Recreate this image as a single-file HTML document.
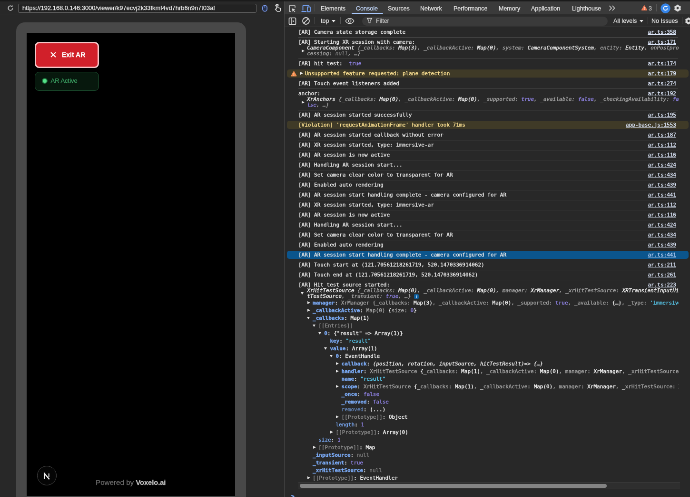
<!DOCTYPE html>
<html lang="en">
<head>
<meta charset="utf-8">
<title>AR viewer - DevTools</title>
<style>
html,body{margin:0;padding:0;background:#282828;}
body{width:690px;height:497px;overflow:hidden;position:relative;}
#app{will-change:transform;position:absolute;left:0;top:0;width:1450px;height:1045px;transform:scale(.47586);transform-origin:0 0;overflow:hidden;background:#282828;font-family:"Liberation Sans","DejaVu Sans",sans-serif;color:#e3e3e3;-webkit-text-stroke:0.25px;}
#app *{box-sizing:border-box;}
.abs{position:absolute;}
/* top dark strip */
#strip{left:0;top:0;width:1450px;height:3px;background:#1b1b1b;}
/* ---------- left pane ---------- */
#left{left:0;top:3px;width:597px;height:1042px;background:#282828;overflow:hidden;}
#lbar{left:0;top:0;width:597px;height:27px;border-bottom:1px solid #555;}
#url{left:38px;top:5px;width:501px;height:19px;border:1px solid #686868;border-radius:3px;background:#222;font-size:12.9px;line-height:16.500px;padding-left:8px;color:#f0f0f0;white-space:nowrap;overflow:hidden;letter-spacing:0px;}
#frame{left:34px;top:44px;width:483px;height:1040px;border-radius:18px;background:#484848;}
#screen{left:56px;top:66px;width:438px;height:973px;background:#000;overflow:hidden;}
#exit{left:17px;top:19px;width:135px;height:55px;border-radius:9px;background:#d1202a;border:3px solid #f6c6c8;color:#fff;font-weight:bold;font-size:14px;line-height:49px;white-space:nowrap;}
#exit .x{position:absolute;left:28px;top:0;font-size:13px;font-weight:bold;}
#exit .t{position:absolute;left:54px;top:0;}
#active{left:17px;top:82px;width:135px;height:40px;border-radius:9px;background:#07180d;border:1.500px solid #1f5533;color:#3da565;font-size:13px;line-height:36px;white-space:nowrap;}
#active .dot{position:absolute;left:16px;top:14px;width:8px;height:8px;border-radius:50%;background:#55e088;box-shadow:0 0 0 2px rgba(50,190,100,.55);}
#active .t{position:absolute;left:32.500px;top:0;}
#ncirc{left:22px;top:910px;width:41px;height:41px;border-radius:50%;border:1px solid #4a4a4a;background:#050505;}
#pow{left:145px;top:935px;font-size:15.2px;line-height:20px;color:#6f6f6f;white-space:nowrap;}
#pow b{color:#c4c4c4;font-weight:bold;font-size:14.6px;}
/* ---------- divider ---------- */
#divider{left:597px;top:3px;width:1px;height:1042px;background:#474747;}
/* ---------- right pane ---------- */
#right{left:598px;top:3px;width:852px;height:1042px;background:#282828;overflow:hidden;}
#tabs{left:0;top:0;width:852px;height:27px;background:#3a3a3a;border-bottom:1px solid #505050;font-size:12.5px;line-height:26px;color:#e3e3e3;white-space:nowrap;}
#tabs .tab{position:absolute;top:2px;}
#tabs .sel{color:#c3d8fb;}
#tabs .ul{position:absolute;top:24px;height:2px;background:#a8c7fa;border-radius:1px;}
.vsep{position:absolute;width:1px;background:#555;}
#tool{left:0;top:27px;width:852px;height:27px;background:#2b2b2b;border-bottom:1px solid #474747;font-size:12.5px;line-height:26px;white-space:nowrap;}
#filter{left:163px;top:4.500px;width:516px;height:19px;border-radius:9.500px;background:#3a3a3a;}
#tool .t{position:absolute;top:1px;}
/* console */
#con{-webkit-text-stroke:0.36px;left:0;top:54px;width:852px;height:988px;font-family:"DejaVu Sans Mono","Liberation Mono",monospace;font-size:11px;line-height:12px;color:#eaeaea;overflow:hidden;}
.row{position:relative;width:852px;height:21px;padding:4.5px 0 0 29px;white-space:nowrap;}
.row.t3{height:45px;}
.row::before{content:"";position:absolute;left:29px;right:25px;top:0;height:1px;background:#4a4a4a;}
.row.nb::before{display:none;}
.row .hl{position:absolute;left:5px;right:3px;top:2px;bottom:2px;border-radius:5px;z-index:0;}
.row.warn .hl{background:#3f3a27;}
.row.warn{color:#fde293;}
.row.selr .hl{background:#0b558d;}
.row.selr .lnk{color:#bcd4fb;}
.row .c{position:relative;z-index:1;}
.row .lnk{position:absolute;right:29px;top:4.5px;text-decoration:underline;color:#dbe5f8;z-index:1;}
.obj{position:relative;padding-left:18.2px;font-style:italic;}
.obj .a{position:absolute;left:6.500px;top:9px;}
.g{color:#a4a4a4;}
.w{color:#f1f1f1;}
.p{color:#9487ec;}
.s{color:#5cd5fb;}
.n{color:#7a7a7a;}
.k{color:#7cacf8;font-weight:bold;}
.kd{color:#8e8e8e;}
.ni{font-style:normal;}
/* arrows */
.ar,.ad{display:inline-block;width:0;height:0;vertical-align:middle;}
.ar{border-left:6px solid #e4e4e4;border-top:3.5px solid transparent;border-bottom:3.5px solid transparent;}
.ad{border-top:5.5px solid #e4e4e4;border-left:3.8px solid transparent;border-right:3.8px solid transparent;}
.info{display:inline-block;width:10px;height:10px;margin-top:1px;border-radius:2.500px;background:#0d5a96;color:#a8d4ff;font-style:italic;font-weight:bold;font-size:9px;line-height:10px;text-align:center;vertical-align:top;font-family:"Liberation Serif",serif;}
#hscroll{left:29px;top:1010px;width:802px;height:15px;background:#2e2e2e;border-top:1px solid #3d3d3d;border-bottom:1px solid #3d3d3d;}
#hscroll div{position:absolute;left:3px;top:3px;width:645px;height:7.5px;border-radius:4px;background:#838383;}
#prompt{left:13px;top:1033px;font-family:"DejaVu Sans Mono","Liberation Mono",monospace;font-size:13px;line-height:14px;color:#7cacf8;font-weight:bold;}
/* tree */
#tree{position:relative;margin-top:0.5px;width:800px;overflow:hidden;padding-left:0.7px;}
.tr{position:relative;height:16px;line-height:16px;white-space:nowrap;}
.tr .ar{position:absolute;top:4.2px;margin-left:1.8px;}
.tr .ad{position:absolute;top:5.2px;margin-left:1.3px;}
.tr .tx{position:absolute;top:0;}
</style>
</head>
<body>
<div id="app">
<div id="strip" class="abs"></div>

<!-- ================= LEFT ================= -->
<div id="left" class="abs">
  <div id="lbar" class="abs">
    <svg class="abs" style="left:14px;top:6px" width="16" height="16" viewBox="0 0 16 16"><path d="M12.6 8.4a4.7 4.7 0 1 1-1.5-3.8" fill="none" stroke="#d0d0d0" stroke-width="1.6"/><path d="M9.2 4.9h3.2V1.7z" fill="#d0d0d0"/></svg>
    <div id="url" class="abs">https://192.168.0.146:3000/viewer/k97ecvj2k33fkmf4vd7hrb6n9n7t03af</div>
    <svg class="abs" style="left:549.500px;top:6.500px" width="13" height="15" viewBox="0 0 13 15"><rect x="1.800" y="1.200" width="9.400" height="12.600" rx="4.700" fill="#26324e" stroke="#7c9cf0" stroke-width="1.600"/><path d="M6.500 1.500v4.500" stroke="#7c9cf0" stroke-width="1.300"/></svg>
    <svg class="abs" style="left:574px;top:4px" width="20" height="20" viewBox="0 0 20 20"><path d="M7 11V4.2a1.4 1.4 0 0 1 2.8 0V9l4.6 1.1c.9.2 1.4 1 1.3 1.9l-.6 3.6c-.1.8-.8 1.4-1.6 1.400H9.300c-.6 0-1.100-.3-1.400-.7L4.400 12.400c.7-.9 1.700-1.100 2.600-.6z" fill="none" stroke="#e0e0e0" stroke-width="1.5" stroke-linejoin="round"/><path d="M4.800 6.200a3.800 3.800 0 0 1 7.200-1.800" fill="none" stroke="#e0e0e0" stroke-width="1.300"/></svg>
  </div>
  <div id="frame" class="abs"></div>
  <div id="screen" class="abs">
    <div id="exit" class="abs"><svg class="abs" style="left:28.500px;top:17px" width="14" height="14" viewBox="0 0 14 14"><path d="M2 2l10 10M12 2L2 12" stroke="#fff" stroke-width="2.1" fill="none"/></svg><span class="t">Exit AR</span></div>
    <div id="active" class="abs"><span class="dot"></span><span class="t">AR Active</span></div>
    <div id="ncirc" class="abs"><svg class="abs" style="left:9px;top:9.500px" width="21" height="21" viewBox="0 0 18 18"><path d="M4.500 14V4.200L13.500 14.800" fill="none" stroke="#f2f2f2" stroke-width="2.200"/><path d="M12.600 4.200v6.500" stroke="#cfcfcf" stroke-width="1.900"/></svg></div>
    <div id="pow" class="abs">Powered by <b>Voxelo.ai</b></div>
  </div>
</div>
<div id="divider" class="abs"></div>

<!-- ================= RIGHT ================= -->
<div id="right" class="abs">
  <div id="tabs" class="abs">
    <svg class="abs" style="left:7px;top:6px" width="18" height="18" viewBox="0 0 18 18"><path d="M15 7V3.500a.5.5 0 0 0-.5-.5h-11a.5.5 0 0 0-.5.5v11a.5.5 0 0 0 .5.5H7" fill="none" stroke="#d6d6d6" stroke-width="1.600"/><path d="M8.500 8.500l7 2.600-3 1.300 3 3-1.200 1.200-3-3-1.300 3z" fill="#d6d6d6"/></svg>
    <svg class="abs" style="left:34px;top:5px" width="22" height="20" viewBox="0 0 22 20"><path d="M4.500 14V4.500a1 1 0 0 1 1-1H18" fill="none" stroke="#739ff0" stroke-width="1.800"/><path d="M1.500 16h10.500" stroke="#739ff0" stroke-width="2"/><rect x="14" y="6.500" width="6" height="10" rx="1" fill="none" stroke="#739ff0" stroke-width="1.800"/></svg>
    <div class="vsep" style="left:63px;top:6px;height:15px"></div>
    <span class="tab" style="left:76px">Elements</span>
    <span class="tab sel" style="left:150px">Console</span>
    <div class="ul" style="left:141px;width:66px"></div>
    <span class="tab" style="left:217px">Sources</span>
    <span class="tab" style="left:285px">Network</span>
    <span class="tab" style="left:355px">Performance</span>
    <span class="tab" style="left:450px">Memory</span>
    <span class="tab" style="left:518px">Application</span>
    <span class="tab" style="left:604px">Lighthouse</span>
    <svg class="abs" style="left:681px;top:8px" width="15" height="12" viewBox="0 0 15 12"><path d="M1.500 1l4.500 5-4.500 5M8 1l4.500 5L8 11" fill="none" stroke="#d4d4d4" stroke-width="1.700"/></svg>
    <svg class="abs" style="left:749px;top:7px" width="14" height="13" viewBox="0 0 14 13"><path d="M7 2.200L12.200 11H1.800z" fill="#ee7752" stroke="#ee7752" stroke-width="2" stroke-linejoin="round"/><path d="M7 4.800v3.400" stroke="#ffe9e0" stroke-width="1.300"/><circle cx="7" cy="9.900" r=".8" fill="#ffe9e0"/></svg>
    <span class="tab" style="left:765px;color:#bdbdbd">3</span>
    <div class="vsep" style="left:781px;top:6px;height:15px"></div>
    <svg class="abs" style="left:789.500px;top:4px" width="21" height="21" viewBox="0 0 21 21"><circle cx="10.500" cy="10.500" r="10.200" fill="#3584e8"/><path d="M14.500 10.500a4 4 0 1 1-1.300-3" fill="none" stroke="#fff" stroke-width="1.700"/><path d="M11.600 7.800h3V4.800z" fill="#fff"/></svg>
    <svg class="abs" style="left:817px;top:5px" width="18" height="18" viewBox="0 0 18 18"><g fill="#dadada"><rect x="7.100" y="1.700" width="3.800" height="14.600" rx=".8"/><rect x="7.100" y="1.700" width="3.800" height="14.600" rx=".8" transform="rotate(60 9 9)"/><rect x="7.100" y="1.700" width="3.800" height="14.600" rx=".8" transform="rotate(120 9 9)"/></g><circle cx="9" cy="9" r="4.800" fill="none" stroke="#dadada" stroke-width="3"/><circle cx="9" cy="9" r="2.400" fill="#3a3a3a"/></svg>
  </div>

  <div id="tool" class="abs">
    <svg class="abs" style="left:8px;top:5.500px" width="17" height="17" viewBox="0 0 17 17"><rect x="1.500" y="1.500" width="14" height="14" rx="2" fill="none" stroke="#dcdcdc" stroke-width="1.700"/><path d="M6 1.500v14" stroke="#dcdcdc" stroke-width="1.700"/><path d="M9 6l3.500 2.500L9 11z" fill="#dcdcdc"/></svg>
    <svg class="abs" style="left:36px;top:5px" width="18" height="18" viewBox="0 0 18 18"><circle cx="9" cy="9" r="7" fill="none" stroke="#dcdcdc" stroke-width="1.800"/><path d="M4.200 13.800L13.800 4.200" stroke="#dcdcdc" stroke-width="1.800"/></svg>
    <div class="vsep" style="left:63px;top:6px;height:15px"></div>
    <span class="t" style="left:76px">top</span>
    <i class="ad" style="position:absolute;left:98.500px;top:12px;border-top-width:5px;border-left-width:4px;border-right-width:4px;border-top-color:#e6e6e6"></i>
    <div class="vsep" style="left:117px;top:6px;height:15px"></div>
    <svg class="abs" style="left:127px;top:6.500px" width="20" height="14.200" viewBox="0 0 24 17"><path d="M1.500 8.500C4 4 8 2 12 2s8 2 10.500 6.500C20 13 16 15 12 15S4 13 1.500 8.500z" fill="none" stroke="#dcdcdc" stroke-width="1.700"/><circle cx="12" cy="8.500" r="3.300" fill="none" stroke="#dcdcdc" stroke-width="1.700"/></svg>
    <div class="vsep" style="left:156px;top:6px;height:15px"></div>
    <div id="filter" class="abs"></div>
    <svg class="abs" style="left:172px;top:7px" width="13" height="13" viewBox="0 0 13 13"><path d="M1.500 1.500h10L7.800 6.500v4.500H5.200V6.500z" fill="none" stroke="#cfcfcf" stroke-width="1.400" stroke-linejoin="round"/></svg>
    <span class="t" style="left:192px;color:#c7c7c7">Filter</span>
    <span class="t" style="left:691px">All levels</span>
    <i class="ad" style="position:absolute;left:746px;top:12px;border-top-width:5px;border-left-width:4px;border-right-width:4px;border-top-color:#e6e6e6"></i>
    <div class="vsep" style="left:763px;top:6px;height:15px"></div>
    <span class="t" style="left:771px">No Issues</span>
    <div class="vsep" style="left:835px;top:6px;height:15px"></div>
    <svg class="abs" style="left:840px;top:5px" width="18" height="18" viewBox="0 0 18 18"><g fill="#dadada"><rect x="7.100" y="1.700" width="3.800" height="14.600" rx=".8"/><rect x="7.100" y="1.700" width="3.800" height="14.600" rx=".8" transform="rotate(60 9 9)"/><rect x="7.100" y="1.700" width="3.800" height="14.600" rx=".8" transform="rotate(120 9 9)"/></g><circle cx="9" cy="9" r="4.800" fill="none" stroke="#dadada" stroke-width="3"/><circle cx="9" cy="9" r="2.400" fill="#2b2b2b"/></svg>
  </div>

  <div id="con" class="abs">
    <div class="row nb"><span class="c">[AR] Camera state storage complete</span><span class="lnk">ar.ts:358</span></div>
    <div class="row t3"><span class="c">[AR] Starting XR session with camera:</span><span class="lnk">ar.ts:171</span>
      <div class="obj c"><i class="ar a"></i><span class="w">CameraComponent </span><span class="g">{_callbacks: </span><span class="w">Map(3)</span><span class="g">, _callbackActive: </span><span class="w">Map(0)</span><span class="g">, system: </span><span class="w">CameraComponentSystem</span><span class="g">, entity: </span><span class="w">Entity</span><span class="g">, onPostpro<br>cessing: </span><span class="n">null</span><span class="g">, …}</span></div>
    </div>
    <div class="row"><span class="c">[AR] hit test: &nbsp;<span class="p">true</span></span><span class="lnk">ar.ts:174</span></div>
    <div class="row warn nb"><div class="hl"></div><svg class="abs" style="left:12.500px;top:4.500px;z-index:1" width="13" height="12" viewBox="0 0 13 12"><path d="M6.500 1.600L11.600 10.400H1.400z" fill="#f08a4b" stroke="#f08a4b" stroke-width="2" stroke-linejoin="round"/><path d="M6.500 4.300v3.300" stroke="#fff0e4" stroke-width="1.300"/><circle cx="6.500" cy="9.300" r=".8" fill="#fff0e4"/></svg><span class="c"><i class="ar" style="margin:0 3.7px 1px 4px;border-left-color:#ececec"></i>Unsupported feature requested: plane-detection</span><span class="lnk">ar.ts:179</span></div>
    <div class="row nb"><span class="c">[AR] Touch event listeners added</span><span class="lnk">ar.ts:274</span></div>
    <div class="row t3"><span class="c">anchor:</span><span class="lnk">ar.ts:192</span>
      <div class="obj c"><i class="ar a"></i><span class="w">XrAnchors </span><span class="g">{_callbacks: </span><span class="w">Map(0)</span><span class="g">, _callbackActive: </span><span class="w">Map(0)</span><span class="g">, _supported: </span><span class="p">true</span><span class="g">, _available: </span><span class="p">false</span><span class="g">, _checkingAvailability: </span><span class="p">fa<br>lse</span><span class="g">, …}</span></div>
    </div>
    <div class="row"><span class="c">[AR] AR session started successfully</span><span class="lnk">ar.ts:195</span></div>
    <div class="row warn nb"><div class="hl"></div><span class="c">[Violation] 'requestAnimationFrame' handler took 71ms</span><span class="lnk">app-base.js:1553</span></div>
    <div class="row nb"><span class="c">[AR] AR session started callback without error</span><span class="lnk">ar.ts:187</span></div>
    <div class="row"><span class="c">[AR] XR session started, type: immersive-ar</span><span class="lnk">ar.ts:112</span></div>
    <div class="row"><span class="c">[AR] AR session is now active</span><span class="lnk">ar.ts:116</span></div>
    <div class="row"><span class="c">[AR] Handling AR session start...</span><span class="lnk">ar.ts:424</span></div>
    <div class="row"><span class="c">[AR] Set camera clear color to transparent for AR</span><span class="lnk">ar.ts:434</span></div>
    <div class="row"><span class="c">[AR] Enabled auto rendering</span><span class="lnk">ar.ts:439</span></div>
    <div class="row"><span class="c">[AR] AR session start handling complete - camera configured for AR</span><span class="lnk">ar.ts:441</span></div>
    <div class="row"><span class="c">[AR] XR session started, type: immersive-ar</span><span class="lnk">ar.ts:112</span></div>
    <div class="row"><span class="c">[AR] AR session is now active</span><span class="lnk">ar.ts:116</span></div>
    <div class="row"><span class="c">[AR] Handling AR session start...</span><span class="lnk">ar.ts:424</span></div>
    <div class="row"><span class="c">[AR] Set camera clear color to transparent for AR</span><span class="lnk">ar.ts:434</span></div>
    <div class="row"><span class="c">[AR] Enabled auto rendering</span><span class="lnk">ar.ts:439</span></div>
    <div class="row selr nb"><div class="hl"></div><span class="c">[AR] AR session start handling complete - camera configured for AR</span><span class="lnk">ar.ts:441</span></div>
    <div class="row nb"><span class="c">[AR] Touch start at (121.70561218261719, 520.1470336914062)</span><span class="lnk">ar.ts:211</span></div>
    <div class="row"><span class="c">[AR] Touch end at (121.70561218261719, 520.1470336914062)</span><span class="lnk">ar.ts:261</span></div>
    <div class="row" style="height:auto"><span class="c">[AR] Hit test source started:</span><span class="lnk">ar.ts:223</span>
      <div class="obj c"><i class="ad a" style="left:4.500px;top:9.500px"></i><span class="w">XrHitTestSource </span><span class="g">{_callbacks: </span><span class="w">Map(0)</span><span class="g">, _callbackActive: </span><span class="w">Map(0)</span><span class="g">, manager: </span><span class="w">XrManager</span><span class="g">, _xrHitTestSource: </span><span class="w">XRTransientInputHi<br>tTestSource</span><span class="g">, _transient: </span><span class="p">true</span><span class="g">, …} </span><span class="info">i</span></div>
      <div id="tree" class="c">
        <div class="tr"><i class="ar" style="left:17px"></i><span class="tx" style="left:29.4px"><span class="k">manager</span>: <span class="g">XrManager {_callbacks: </span><span class="w">Map(3)</span><span class="g">, _callbackActive: </span><span class="w">Map(0)</span><span class="g">, _supported: </span><span class="p">true</span><span class="g">, _available: </span><span class="w">{…}</span><span class="g">, _type: </span><span class="s">'immersive-ar'</span><span class="g">, …}</span></span></div>
        <div class="tr"><i class="ar" style="left:17px"></i><span class="tx" style="left:29.4px"><span class="k">_callbackActive</span>: <span class="g">Map(0) </span><span class="w">{</span><span class="g">size: </span><span class="p">0</span><span class="w">}</span></span></div>
        <div class="tr"><i class="ad" style="left:16px"></i><span class="tx" style="left:29.4px"><span class="k">_callbacks</span>: <span class="w">Map(1)</span></span></div>
        <div class="tr"><i class="ad" style="left:28px"></i><span class="tx" style="left:41.500px"><span class="kd">[[Entries]]</span></span></div>
        <div class="tr"><i class="ad" style="left:40px"></i><span class="tx" style="left:53.600px"><span class="k">0</span>: <span class="w">{"result" =&gt; Array(1)}</span></span></div>
        <div class="tr"><span class="tx" style="left:65.700px"><span class="k">key</span>: <span class="s">"result"</span></span></div>
        <div class="tr"><i class="ad" style="left:52px"></i><span class="tx" style="left:65.700px"><span class="k">value</span>: <span class="w">Array(1)</span></span></div>
        <div class="tr"><i class="ad" style="left:64px"></i><span class="tx" style="left:77.800px"><span class="k">0</span>: <span class="w">EventHandle</span></span></div>
        <div class="tr"><i class="ar" style="left:77px"></i><span class="tx" style="left:89.900px"><span class="k">callback</span>: <span class="w" style="font-style:italic">(position, rotation, inputSource, hitTestResult)=&gt; {…}</span></span></div>
        <div class="tr"><i class="ar" style="left:77px"></i><span class="tx" style="left:89.900px"><span class="k">handler</span>: <span class="g">XrHitTestSource </span><span class="w">{</span><span class="g">_callbacks: </span><span class="w">Map(1)</span><span class="g">, _callbackActive: </span><span class="w">Map(0)</span><span class="g">, manager: </span><span class="w">XrManager</span><span class="g">, _xrHitTestSource: </span><span class="w">XRTransientInputHitTestSource</span></span></div>
        <div class="tr"><span class="tx" style="left:89.900px"><span class="k">name</span>: <span class="s">"result"</span></span></div>
        <div class="tr"><i class="ar" style="left:77px"></i><span class="tx" style="left:89.900px"><span class="k">scope</span>: <span class="g">XrHitTestSource </span><span class="w">{</span><span class="g">_callbacks: </span><span class="w">Map(1)</span><span class="g">, _callbackActive: </span><span class="w">Map(0)</span><span class="g">, manager: </span><span class="w">XrManager</span><span class="g">, _xrHitTestSource: </span><span class="w">XRTransientInputHitTestSource</span></span></div>
        <div class="tr"><span class="tx" style="left:89.900px"><span class="k">_once</span>: <span class="p">false</span></span></div>
        <div class="tr"><span class="tx" style="left:89.900px"><span class="k">_removed</span>: <span class="p">false</span></span></div>
        <div class="tr"><span class="tx" style="left:89.900px"><span class="kd" style="color:#5f7fb0">removed</span>: <span class="w">(...)</span></span></div>
        <div class="tr"><i class="ar" style="left:77px"></i><span class="tx" style="left:89.900px"><span class="kd">[[Prototype]]</span>: <span class="w">Object</span></span></div>
        <div class="tr"><span class="tx" style="left:77.800px"><span class="k" style="font-weight:normal">length</span>: <span class="p">1</span></span></div>
        <div class="tr"><i class="ar" style="left:65px"></i><span class="tx" style="left:77.800px"><span class="kd">[[Prototype]]</span>: <span class="w">Array(0)</span></span></div>
        <div class="tr"><span class="tx" style="left:41.500px"><span class="k" style="font-weight:normal">size</span>: <span class="p">1</span></span></div>
        <div class="tr"><i class="ar" style="left:29px"></i><span class="tx" style="left:41.500px"><span class="kd">[[Prototype]]</span>: <span class="w">Map</span></span></div>
        <div class="tr"><span class="tx" style="left:29.400px"><span class="k">_inputSource</span>: <span class="n">null</span></span></div>
        <div class="tr"><span class="tx" style="left:29.400px"><span class="k">_transient</span>: <span class="p">true</span></span></div>
        <div class="tr"><span class="tx" style="left:29.400px"><span class="k">_xrHitTestSource</span>: <span class="n">null</span></span></div>
        <div class="tr"><i class="ar" style="left:17px"></i><span class="tx" style="left:29.400px"><span class="kd">[[Prototype]]</span>: <span class="w">EventHandler</span></span></div>
      </div>
    </div>
  </div>
  <div id="hscroll" class="abs"><div></div></div>
  <div id="prompt" class="abs">&gt;</div>
</div>
</div>
</body>
</html>
